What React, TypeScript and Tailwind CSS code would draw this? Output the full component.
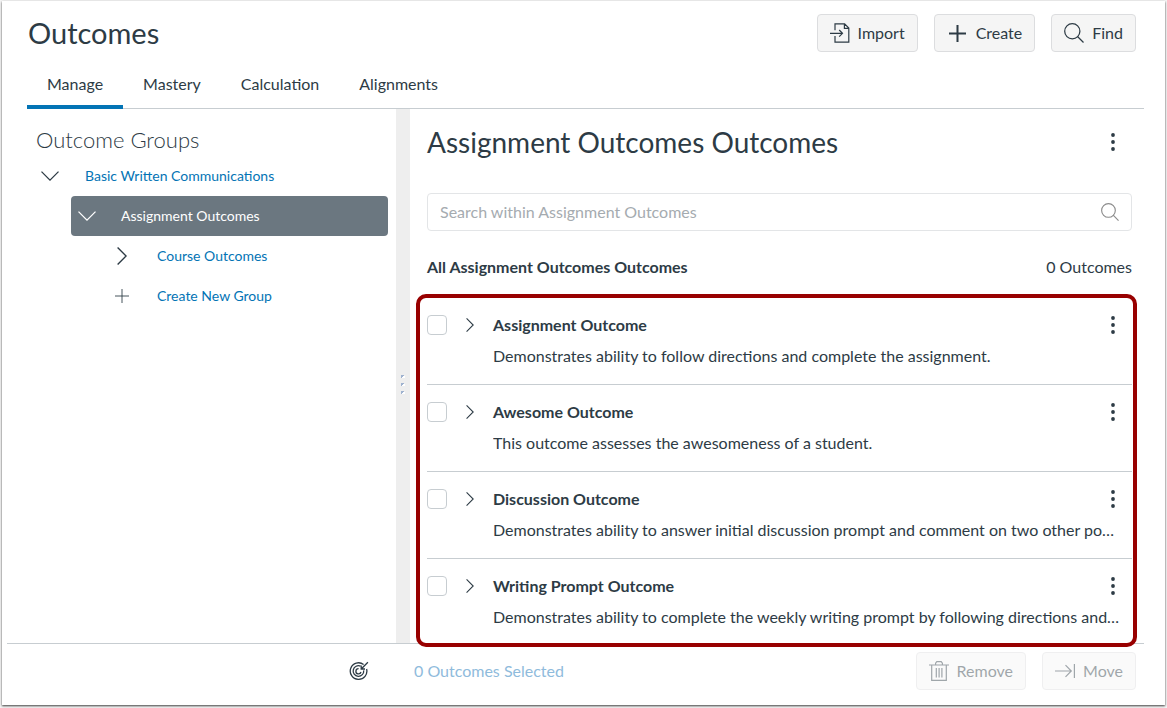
import React from "react";

type IconProps = { className?: string };

function ImportIcon({ className }: IconProps) {
  return (
    <svg viewBox="0 0 20 20" className={className} fill="none" stroke="currentColor" strokeWidth="1.2" aria-hidden="true">
      <path d="M5 7.2V.9h9.6l4.2 4.2v14H5v-6M14.4 1v4.4h4.3M0 10.3h12.2M9.2 7l3.3 3.3-3.3 3.3" />
    </svg>
  );
}

function PlusIcon({ className, weight = 1 }: IconProps & { weight?: number }) {
  return (
    <svg viewBox="0 0 16 16" className={className} fill="none" stroke="currentColor" strokeWidth={weight} aria-hidden="true">
      <path d="M8 0v16M0 8h16" />
    </svg>
  );
}

function SearchIcon({ className }: IconProps) {
  return (
    <svg viewBox="0 0 20 20" className={className} fill="none" stroke="currentColor" strokeWidth="1.25" aria-hidden="true">
      <circle cx="8.3" cy="8.3" r="7.6" />
      <path d="M13.5 13.5l6 6" />
    </svg>
  );
}

function ChevronDown({ className }: IconProps) {
  return (
    <svg viewBox="0 0 18 10" className={className} fill="none" stroke="currentColor" strokeWidth="1.3" aria-hidden="true">
      <path d="M.5.6L9 9.1 17.5.6" />
    </svg>
  );
}

function ChevronRight({ className }: IconProps) {
  return (
    <svg viewBox="0 0 10 18" className={className} fill="none" stroke="currentColor" strokeWidth="1.4" aria-hidden="true">
      <path d="M.6.5L9.1 9 .6 17.5" />
    </svg>
  );
}

function MoreIcon({ className }: IconProps) {
  return (
    <svg viewBox="0 0 4 18" className={className} fill="currentColor" aria-hidden="true">
      <circle cx="2" cy="2" r="1.9" />
      <circle cx="2" cy="9" r="1.9" />
      <circle cx="2" cy="16" r="1.9" />
    </svg>
  );
}

function TrashIcon({ className }: IconProps) {
  return (
    <svg viewBox="0 0 20 20" className={className} fill="none" stroke="currentColor" strokeWidth="1.2" aria-hidden="true">
      <path d="M0 4h20M2.7 4v15.4h14.6V4M6.6 4V2.1L7.8.7h4.4l1.2 1.4V4M7.3 7v9.4M10.1 7v9.4M12.9 7v9.4" />
    </svg>
  );
}

function MoveIcon({ className }: IconProps) {
  return (
    <svg viewBox="0 0 20 14" className={className} fill="none" stroke="currentColor" strokeWidth="1.2" aria-hidden="true">
      <path d="M0 7h16.2M10.5 1.2L16.3 7l-5.8 5.8M19.4 0v14" />
    </svg>
  );
}

function TargetIcon({ className }: IconProps) {
  return (
    <svg viewBox="0 0 20 20" className={className} fill="none" stroke="currentColor" strokeWidth="1.3" aria-hidden="true">
      <path d="M14.6 3.5A8.3 8.3 0 1 0 17.6 8" />
      <path d="M11.6 5.2A5.3 5.3 0 1 0 14.7 9.4" />
      <path d="M9.6 7.7A2.6 2.6 0 1 0 12 11" />
      <path d="M12.2 8L18.9 1.3M12.2 4.4V8h3.8" />
    </svg>
  );
}

const tabs = ["Manage", "Mastery", "Calculation", "Alignments"];

const outcomes = [
  { title: "Assignment Outcome", text: "Demonstrates ability to follow directions and complete the assignment." },
  { title: "Awesome Outcome", text: "This outcome assesses the awesomeness of a student." },
  {
    title: "Discussion Outcome",
    text: "Demonstrates ability to answer initial discussion prompt and comment on two other po…",
  },
  {
    title: "Writing Prompt Outcome",
    text: "Demonstrates ability to complete the weekly writing prompt by following directions and…",
  },
];

function ToolButton({ icon, label, disabled }: { icon: React.ReactNode; label: string; disabled?: boolean }) {
  return (
    <button
      type="button"
      disabled={disabled}
      className="flex h-[38px] items-center gap-2 rounded border border-[#dcdddf] bg-[#f5f5f5] px-3 disabled:opacity-45"
    >
      {icon}
      {label}
    </button>
  );
}

function OutcomeRow({ title, text }: { title: string; text: string }) {
  return (
    <li className="flex h-[87px] items-start border-b border-[#c7cdd1] pt-4 last:h-[84px] last:border-b-0">
      <input
        type="checkbox"
        aria-label={`Select ${title}`}
        className="mt-px size-5 shrink-0 appearance-none rounded border border-[#c7cdd1] bg-white"
      />
      <button type="button" aria-label={`Expand ${title}`} className="flex h-[22px] w-[46px] shrink-0 items-center justify-center">
        <ChevronRight className="h-[14px] w-2" />
      </button>
      <div className="min-w-0 flex-1">
        <div className="flex items-center justify-between">
          <h3 className="leading-[22px] font-bold">{title}</h3>
          <button type="button" aria-label={`Options for ${title}`} className="flex h-[22px] w-[38px] items-center justify-center">
            <MoreIcon className="h-[18px] w-1" />
          </button>
        </div>
        <p className="mt-2 mr-2 truncate leading-6">{text}</p>
      </div>
    </li>
  );
}

export default function App() {
  return (
    <div className="flex min-h-screen flex-col bg-[#f4f4f4] px-0.5 pt-px pb-[3px] font-['Lato',sans-serif] text-base text-[#2d3b45]">
      <div className="flex flex-1 flex-col bg-white shadow-[0_1px_2px_rgba(0,0,0,0.75)]">
        <header className="flex items-start justify-between pr-[29px] pl-[26px] pt-[13px]">
          <h1 className="text-[29px] leading-[38px]">Outcomes</h1>
          <div className="flex gap-4">
            <ToolButton icon={<ImportIcon className="size-5" />} label="Import" />
            <ToolButton icon={<PlusIcon className="mx-0.5 size-[17px]" weight={1.9} />} label="Create" />
            <ToolButton icon={<SearchIcon className="size-5" />} label="Find" />
          </div>
        </header>

        <nav role="tablist" className="mr-[21px] ml-[25px] mt-[10px] flex border-b border-[#c7cdd1]">
          {tabs.map((tab, i) => (
            <button
              key={tab}
              type="button"
              role="tab"
              aria-selected={i === 0}
              className="-mb-px h-[47px] border-b-4 border-transparent px-5 aria-selected:border-[#0374b5]"
            >
              {tab}
            </button>
          ))}
        </nav>

        <div className="mr-[21px] ml-[25px] flex flex-1">
          <aside className="w-[369px] shrink-0 pr-2">
            <h2 className="mt-[15px] ml-[9px] text-[22px] leading-8 font-light">Outcome Groups</h2>
            <ul className="text-sm text-[#0374b5]">
              <li className="flex h-10 items-center pl-[14px]">
                <button type="button" aria-label="Collapse Basic Written Communications" className="text-[#2d3b45]">
                  <ChevronDown className="h-[10px] w-[18px]" />
                </button>
                <a href="#basic" className="ml-[26px]">Basic Written Communications</a>
              </li>
              <li className="ml-11 flex h-10 items-center rounded bg-[#6b7780] pl-[7px] text-white">
                <button type="button" aria-label="Collapse Assignment Outcomes">
                  <ChevronDown className="h-[10px] w-[18px]" />
                </button>
                <a href="#assignment" className="ml-[25px]">Assignment Outcomes</a>
              </li>
              <li className="ml-[86px] flex h-10 items-center">
                <button type="button" aria-label="Expand Course Outcomes" className="flex w-[18px] justify-center text-[#2d3b45]">
                  <ChevronRight className="h-[18px] w-[10px]" />
                </button>
                <a href="#course" className="ml-[26px]">Course Outcomes</a>
              </li>
              <li className="ml-[86px] flex h-10 items-center">
                <span className="flex w-[18px] justify-center text-[#2d3b45]">
                  <PlusIcon className="size-[14px]" />
                </span>
                <a href="#new" className="ml-[26px]">Create New Group</a>
              </li>
            </ul>
          </aside>

          <div role="separator" aria-orientation="vertical" className="flex w-[14px] shrink-0 items-center justify-center bg-[#eeeeee]">
            <svg viewBox="0 0 4 20" className="mt-4 h-5 w-1" aria-hidden="true">
              <path d="M1 2h3v2H1zM1 10h3v2H1zM1 18h3v2H1z" fill="#ffffff" />
              <path d="M0 1h3v1H2v1H1v1H0zM0 9h3v1H2v1H1v1H0zM0 17h3v1H2v1H1v1H0z" fill="#9fb2cf" />
            </svg>
          </div>

          <main className="min-w-0 flex-1 pr-3 pl-[17px]">
            <div className="mt-[13px] flex items-center justify-between">
              <h2 className="text-[28px] leading-10">Assignment Outcomes Outcomes</h2>
              <button type="button" aria-label="Group options" className="flex h-[38px] w-[38px] items-center justify-center">
                <MoreIcon className="h-[18px] w-1" />
              </button>
            </div>
            <label className="mt-[31px] flex h-[38px] items-center rounded border border-[#e3e5e7] px-3">
              <input
                type="text"
                aria-label="Search within Assignment Outcomes"
                placeholder="Search within Assignment Outcomes"
                className="min-w-0 flex-1 bg-transparent outline-none placeholder:text-[#a5abb0]"
              />
              <SearchIcon className="size-[18px] text-[#8b8b8b]" />
            </label>
            <div className="mt-6 flex justify-between leading-6">
              <h3 className="font-bold">All Assignment Outcomes Outcomes</h3>
              <span>0 Outcomes</span>
            </div>
            <div className="relative mt-[19px]">
              <ul>
                {outcomes.map((outcome) => (
                  <OutcomeRow key={outcome.title} {...outcome} />
                ))}
              </ul>
              <div className="pointer-events-none absolute -top-1 -right-[5px] -bottom-1 -left-[11px] rounded-[10px] border-4 border-[#980000]" />
            </div>
          </main>
        </div>

        <footer className="mr-[21px] ml-[5px] flex h-[62px] items-center border-t border-[#c7cdd1] pr-2 pb-[7px]">
          <div className="flex flex-1 items-center">
            <TargetIcon className="ml-[342px] size-5" />
            <span className="ml-[45px] text-[#8fbbdc]">0 Outcomes Selected</span>
          </div>
          <div className="flex gap-4">
            <ToolButton disabled icon={<TrashIcon className="size-5" />} label="Remove" />
            <ToolButton disabled icon={<MoveIcon className="h-[14px] w-5" />} label="Move" />
          </div>
        </footer>
      </div>
    </div>
  );
}
